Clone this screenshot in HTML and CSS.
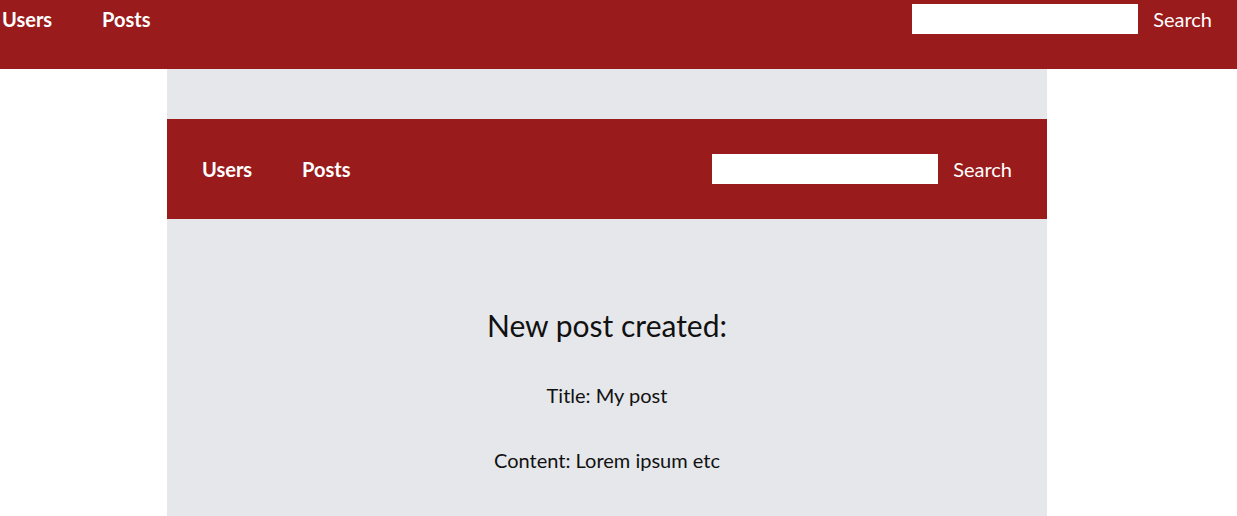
FILE: index.html
```html
<!DOCTYPE html>
<html>
<head>
<meta charset="utf-8">
<link rel="stylesheet" href="styles.css">
</head>
<body>
<header class="topbar">
  <nav class="nav nav-top">
    <div class="links">
      <a class="link" href="#">Users</a>
      <a class="link" href="#">Posts</a>
    </div>
    <form class="search">
      <input class="search-input" type="text">
      <button class="search-btn" type="button">Search</button>
    </form>
  </nav>
</header>
<main class="container">
  <nav class="nav nav-inner">
    <div class="links">
      <a class="link" href="#">Users</a>
      <a class="link" href="#">Posts</a>
    </div>
    <form class="search">
      <input class="search-input" type="text">
      <button class="search-btn" type="button">Search</button>
    </form>
  </nav>
  <section class="post">
    <h1 class="post-heading">New post created:</h1>
    <p class="post-line">Title: My post</p>
    <p class="post-line">Content: Lorem ipsum etc</p>
  </section>
</main>
</body>
</html>
```
FILE: styles.css
```css
html, body {
  margin: 0;
  padding: 0;
  background: #ffffff;
  font-family: "Lato", "Open Sans", sans-serif;
}
.topbar {
  background: #991b1b;
  height: 69px;
}
.nav {
  display: flex;
  justify-content: space-between;
  background: #991b1b;
  color: #ffffff;
}
.nav-top {
  align-items: flex-start;
  padding: 4px 25px 0 2px;
}
.nav-inner {
  align-items: center;
  height: 100px;
  padding: 0 35px;
}
.links {
  display: flex;
  gap: 50px;
  height: 30px;
  align-items: center;
}
.link {
  color: #ffffff;
  text-decoration: none;
  font-weight: 700;
  font-size: 20px;
  width: 50px;
}
.search {
  display: flex;
  align-items: center;
  gap: 15px;
  margin: 0;
}
.search-input {
  width: 226px;
  height: 30px;
  box-sizing: border-box;
  border: none;
  padding: 0;
  margin: 0;
  background: #ffffff;
}
.search-btn {
  background: none;
  border: none;
  padding: 0;
  color: #ffffff;
  font-family: inherit;
  font-size: 20px;
}
.container {
  width: 880px;
  margin: 0 0 0 167px;
  background: #e5e7eb;
  padding-top: 50px;
  min-height: 447px;
  box-sizing: border-box;
}
.post {
  text-align: center;
  color: #111111;
  padding-top: 89px;
}
.post-heading {
  font-weight: 400;
  font-size: 30px;
  margin: 0 0 41px;
  line-height: 34px;
}
.post-line {
  font-size: 20px;
  margin: 0 0 40px;
  line-height: 25px;
}
```
